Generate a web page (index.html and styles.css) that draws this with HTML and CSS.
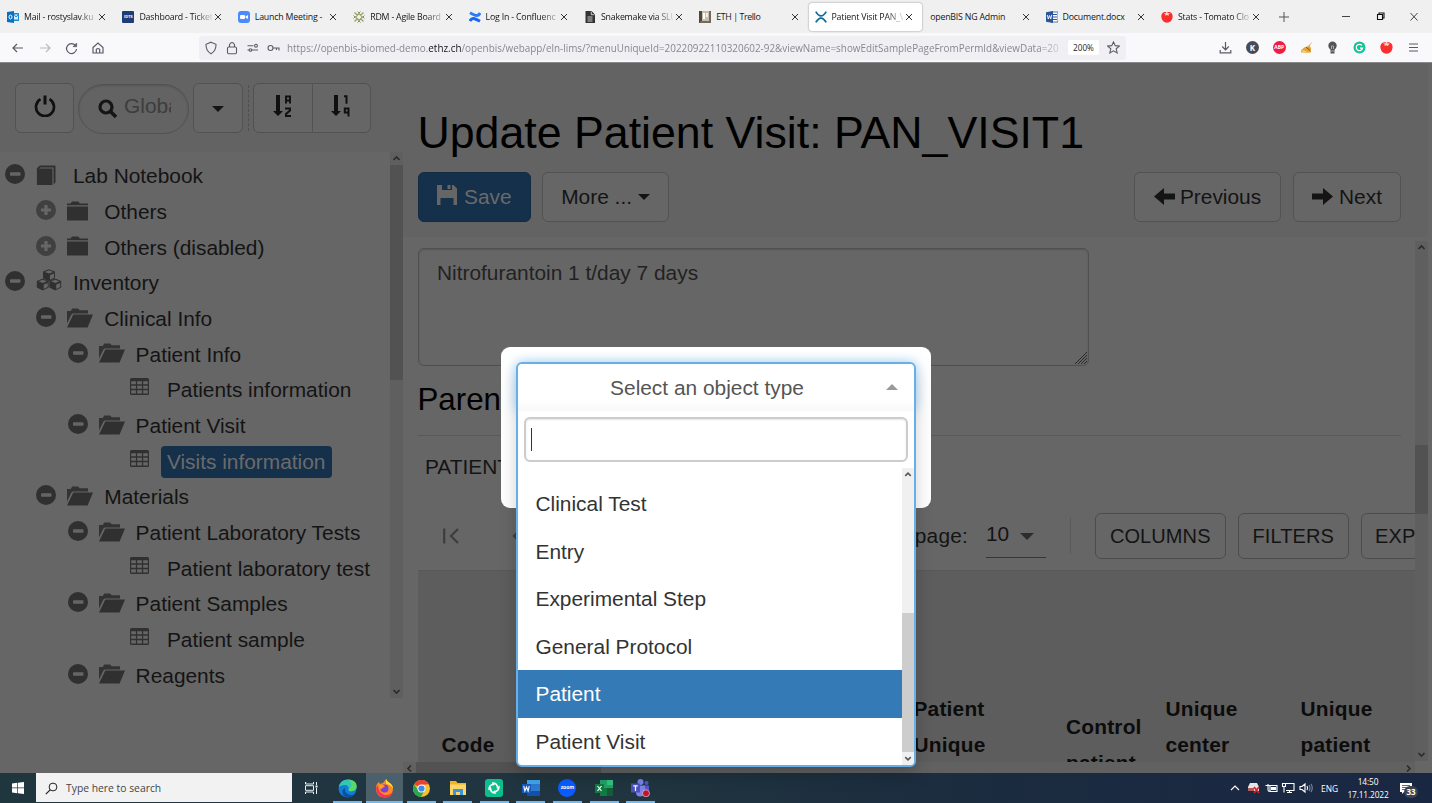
FILE: index.html
```html
<!DOCTYPE html>
<html lang="en">
<head>
<meta charset="utf-8">
<title>Patient Visit PAN_VISIT1</title>
<link rel="stylesheet" href="styles.css">
</head>
<body>
<svg class="defs" aria-hidden="true">
  <symbol id="x" viewBox="0 0 8 8"><path d="M1 1l6 6M7 1L1 7" stroke="#333" stroke-width="1" fill="none"/></symbol>
  <symbol id="minus" viewBox="0 0 20 20"><circle cx="10" cy="10" r="10" fill="#303030"/><rect x="5" y="8.2" width="10.5" height="3.6" rx=".8" fill="#656565"/></symbol>
  <symbol id="plus" viewBox="0 0 20 20"><circle cx="10" cy="10" r="10" fill="#404040"/><path d="M10 5v10M5 10h10" stroke="#666" stroke-width="3.2"/></symbol>
  <symbol id="folder" viewBox="0 0 26 20"><path d="M0 2.6h3.6L5 .6h6.4l1.4 2H21v1.700H0zM0 5.600h21v14H0z" fill="#303030"/></symbol>
  <symbol id="open" viewBox="0 0 26 20"><path d="M0 3h3.8L5.2.6h6l1.4 1.6H21v3.2H5.600L4.400 6.400 0 15.500z" fill="#333"/><path d="M6.300 6.600H26L20.600 19.600H0z" fill="#303030"/></symbol>
  <symbol id="book" viewBox="0 0 26 21"><path d="M.3 3.4L3.4.6h16.4V18l-2 2.4V2.6H4L2.6 3.8h14V21H.3z" fill="#303030"/></symbol>
  <symbol id="table" viewBox="0 0 19 17"><path d="M1.5 0h16Q19 0 19 1.5v14Q19 17 17.500 17h-16Q0 17 0 15.500v-14Q0 0 1.500 0z" fill="#303030"/><path d="M1.200 3.200h4.700v3H1.200zM7.200 3.200h4.700v3H7.200zM13.200 3.200h4.600v3h-4.600zM1.200 7.700h4.700v3H1.200zM7.200 7.700h4.700v3H7.200zM13.200 7.700h4.600v3h-4.600zM1.200 12.200h4.700v3.300H1.200zM7.200 12.200h4.700v3.300H7.200zM13.200 12.200h4.600v3.300h-4.600z" fill="#666"/></symbol>
  <symbol id="cube" viewBox="0 0 12 12"><path d="M6 .3l5.700 2.200v6.300L6 11.700.3 8.800V2.500z" fill="#303030"/><path d="M6 1.300l4 1.500L6 4.400 2 2.800zM6.900 6l3.900-1.600v3.900L6.900 10.200z" fill="#666"/></symbol>
  <symbol id="cubes" viewBox="0 0 26 22"><use href="#cube" x="6.500" y="0" width="13" height="12.500"/><use href="#cube" x="0" y="9.300" width="13.500" height="12.500"/><use href="#cube" x="12.500" y="9.300" width="13.500" height="12.500"/></symbol>
  <symbol id="tomato" viewBox="0 0 13 13"><path d="M6.500 1.500C10 .3 12.900 2.700 12.600 6.500 12.300 10.300 9.600 12.700 6.500 12.700S.7 10.300.4 6.500C.1 2.700 3 .3 6.500 1.500z" fill="#fb2e2e"/><path d="M3 2.200l2.200.3L6.200.8l1.200 1.700 2.600-.2-1.800 1.600.2 1.300-1.900-1-2 .9.300-1.300z" fill="#fff" opacity=".8"/></symbol>
</svg>

<header class="browser">
  <div class="tabs">
    <div class="tab"><svg class="fav" viewBox="0 0 12 12"><path d="M6 2h6v8H6z" fill="#1a8ad6"/><path d="M7 3.500h4v5H7z" fill="#d9ecf9"/><path d="M7 3.500l2 2.500 2.500-2.500" stroke="#1a8ad6" fill="none"/><path d="M0 1l7-1v12l-7-1z" fill="#0a6fc0"/><ellipse cx="3.500" cy="6" rx="1.500" ry="2" fill="none" stroke="#fff"/></svg><span class="name fade">Mail - rostyslav.ku</span><svg class="close"><use href="#x"/></svg></div>
    <div class="tab"><span class="fav idts">IDTS</span><span class="name fade">Dashboard - Ticket</span><svg class="close"><use href="#x"/></svg></div>
    <div class="tab"><svg class="fav" viewBox="0 0 12 12"><rect width="12" height="12" rx="3" fill="#4a8cff"/><rect x="2" y="4" width="5" height="4" rx="1" fill="#fff"/><path d="M7.500 5.500L10 4v4L7.500 6.500z" fill="#fff"/></svg><span class="name">Launch Meeting -</span><svg class="close"><use href="#x"/></svg></div>
    <div class="tab"><svg class="fav" viewBox="0 0 12 12"><path d="M6 2.500L9.500 6 6 9.500 2.500 6zM1.500 1.500l3 3M10.500 1.500l-3 3M1.500 10.500l3-3M10.500 10.500l-3-3" fill="none" stroke="#9aa365" stroke-width="1.300"/><path d="M4.500.5L6 2 7.500.5M4.500 11.500L6 10l1.500 1.500M.5 4.500L2 6 .5 7.500M11.500 4.500L10 6l1.500 1.500" fill="none" stroke="#8b8f6a"/></svg><span class="name fade">RDM - Agile Board</span><svg class="close"><use href="#x"/></svg></div>
    <div class="tab"><svg class="fav" viewBox="0 0 12 12"><path d="M.8 10C3 6 5 7 11 10.300" fill="none" stroke="#1868f0" stroke-width="3"/><path d="M11.200 2C9 6 7 5 1 1.700" fill="none" stroke="#2c7bfa" stroke-width="3"/></svg><span class="name fade">Log In - Confluenc</span><svg class="close"><use href="#x"/></svg></div>
    <div class="tab"><svg class="fav" viewBox="0 0 12 12"><path d="M1.500 0h6L11 3.500V12H1.500z" fill="#333"/><path d="M7.300.7v3h3M3.500 6h5M3.500 8h5M3.500 10h5" fill="none" stroke="#eee" stroke-width=".8"/></svg><span class="name fade">Snakemake via SLU</span><svg class="close"><use href="#x"/></svg></div>
    <div class="tab"><svg class="fav" viewBox="0 0 12 12"><rect width="12" height="12" fill="#c9bfae"/><path d="M0 0h3v12H0z" fill="#4c4942"/><path d="M1 10h10v2H1zM10 0h2v12h-2z" fill="#726a5e"/><path d="M4 2h2v6H4z" fill="#fff"/><path d="M7 2h2v4H7z" fill="#f6efe0"/></svg><span class="name tight">ETH | Trello</span><svg class="close"><use href="#x"/></svg></div>
    <div class="tab active"><svg class="fav" viewBox="0 0 12 12"><path d="M.8.600Q6 9.200 11.200.6M.8 11.400Q6 2.800 11.200 11.400" stroke="#0c6c9c" stroke-width="1.800" fill="none"/></svg><span class="name fade">Patient Visit PAN_V</span><svg class="close"><use href="#x"/></svg></div>
    <div class="tab"><span class="name">openBIS NG Admin</span><svg class="close"><use href="#x"/></svg></div>
    <div class="tab"><svg class="fav" viewBox="0 0 12 12"><rect x="5" y="1" width="7" height="10" fill="#fff" stroke="#2b579a" stroke-width=".8"/><path d="M7 3.500h4M7 6h4M7 8.500h4" stroke="#2b579a"/><path d="M0 1.200L7 0v12l-7-1.200z" fill="#2b579a"/><path d="M1.300 4l1 4 1.200-3.500L4.700 8l1-4" stroke="#fff" stroke-width=".9" fill="none"/></svg><span class="name">Document.docx</span><svg class="close"><use href="#x"/></svg></div>
    <div class="tab"><svg class="fav"><use href="#tomato"/></svg><span class="name fade">Stats - Tomato Clo</span><svg class="close"><use href="#x"/></svg></div>
    <svg class="newtab" viewBox="0 0 10 10"><path d="M5 0v10M0 5h10" stroke="#555"/></svg>
    <svg class="winctl" viewBox="0 0 80 12"><path d="M4 5.500h8" stroke="#444"/><path d="M39.500 3.500h5v5h-5zM41 3.500V2h5v5h-1.500" fill="none" stroke="#111" stroke-width="1.100"/><path d="M72.500 2l7 7.500M79.500 2l-7 7.500" stroke="#444"/></svg>
  </div>
  <div class="navbar">
    <svg class="nav" viewBox="0 0 110 24"><g fill="none" stroke="#5b5b66" stroke-width="1.200"><path d="M23 12H13M17 8l-4 4 4 4"/><path d="M40 12h10M46 8l4 4-4 4" stroke="#bbb"/><path d="M75.500 9.500A5 5 0 1 0 76.500 13"/><path d="M76.700 7v3.700H73z" fill="#5b5b66" stroke-width=".6"/><path d="M93 11.500L98 7l5 4.500v5.500h-10zM96.300 17v-3.500q1.700-2 3.400 0V17"/></g></svg>
    <div class="urlbar">
      <svg class="urlicons" viewBox="0 0 84 24"><g fill="none" stroke="#5b5b66" stroke-width="1.100"><path d="M12 6.200L17 8.300q.3 6.500-5 9.500-5.300-3-5-9.500z"/><rect x="28.500" y="11" width="9" height="6.700" rx="1.200"/><path d="M30.500 11V8.500q2.500-4 5 0V11"/><path d="M48.500 9.700h6M53 14h6M48.500 14h2"/><circle cx="57" cy="9.700" r="1.400"/><circle cx="51.500" cy="14" r="1.300"/><circle cx="71.500" cy="12" r="2.500"/><path d="M74 12h6v2.500M77.500 12v2"/></g></svg>
      <span class="url">https://openbis-biomed-demo.<b>ethz.ch</b>/openbis/webapp/eln-lims/?menuUniqueId=20220922110320602-92&amp;viewName=showEditSamplePageFromPermId&amp;viewData=20</span>
      <span class="zoom">200%</span>
      <svg class="star" viewBox="0 0 12 12"><path d="M6 .8l1.600 3.500 3.800.4-2.900 2.500.9 3.800L6 9.100 2.600 11l.9-3.800L.6 4.700l3.800-.4z" fill="none" stroke="#5b5b66"/></svg>
    </div>
    <div class="exts">
      <svg viewBox="0 0 13 13"><path d="M6.500 1v7.500M3.200 5.500l3.300 3.300 3.300-3.300M1.200 9v2.800h10.600V9" fill="none" stroke="#5b5b66" stroke-width="1.200"/></svg>
      <span class="badge k">K</span><span class="badge abp">ABP</span>
      <svg viewBox="0 0 13 13"><path d="M12.500.5L9.500 5l1.500 2v4.500l-9.500.5-.5-2.500 3-3 3.500-1z" fill="#e0a43c"/><path d="M3 9l4 1.500L5 12H1z" fill="#f0d07c"/><path d="M6 6l4 3.500" stroke="#a23d2a"/></svg>
      <svg viewBox="0 0 13 13"><circle cx="6.500" cy="4.700" r="4.200" fill="#555"/><path d="M4.500 8h4v4.500h-4z" fill="#555"/><path d="M5.500 8V5h2v3M4.500 10h4" stroke="#ccc" stroke-width=".7" fill="none"/></svg>
      <svg viewBox="0 0 13 13"><circle cx="6.500" cy="6.500" r="6" fill="#15c39a"/><path d="M9 4.500A3.200 3.200 0 1 0 9.600 7.200H7" fill="none" stroke="#fff" stroke-width="1.200"/></svg>
      <svg viewBox="0 0 13 13"><use href="#tomato"/></svg>
      <svg viewBox="0 0 13 13"><path d="M2 3h9M2 6.500h9M2 10h9" stroke="#5b5b66" stroke-width="1.100"/></svg>
    </div>
  </div>
</header>

<main class="app">
  <aside class="side">
    <div class="sidehead">
      <div class="btn power"><svg width="22" height="22" viewBox="0 0 22 22"><path d="M6.500 4.200a9 9 0 1 0 9 0" fill="none" stroke="#101010" stroke-width="2.700"/><path d="M11 .5v9" stroke="#101010" stroke-width="3"/></svg></div>
      <div class="search"><svg width="20" height="20" viewBox="0 0 20 20"><circle cx="8" cy="8" r="6" fill="none" stroke="#151515" stroke-width="3.200"/><path d="M12.500 12.500l5.500 5.500" stroke="#151515" stroke-width="3.600"/></svg><span class="ph">Globa</span></div>
      <div class="btn drop"><i class="caret"></i></div>
      <i class="dots"></i>
      <div class="group">
        <span><svg width="19" height="22" viewBox="0 0 19 22"><path d="M3 0h4v16h3l-5 5-5-5h3z" fill="#101010"/><path d="M13 8.500V1.500h4v7M13 5.500h4M12 13.500h5v2l-4 3.500v2h5" fill="none" stroke="#101010" stroke-width="1.900"/></svg></span>
        <span><svg width="19" height="22" viewBox="0 0 19 22"><path d="M3 0h4v16h3l-5 5-5-5h3z" fill="#101010"/><path d="M13 1.300h2.500v7.500M17.500 21.500V13.500h-3.700v4h3.700" fill="none" stroke="#101010" stroke-width="2"/></svg></span>
      </div>
    </div>
    <div class="sidebody">
      <div class="tree">
        <div class="row l0"><svg class="exp"><use href="#minus"/></svg><svg class="ico"><use href="#book"/></svg><span>Lab Notebook</span></div>
        <div class="row l1"><svg class="exp"><use href="#plus"/></svg><svg class="ico"><use href="#folder"/></svg><span>Others</span></div>
        <div class="row l1"><svg class="exp"><use href="#plus"/></svg><svg class="ico"><use href="#folder"/></svg><span>Others (disabled)</span></div>
        <div class="row l0"><svg class="exp"><use href="#minus"/></svg><svg class="ico cubes"><use href="#cubes"/></svg><span>Inventory</span></div>
        <div class="row l1"><svg class="exp"><use href="#minus"/></svg><svg class="ico"><use href="#open"/></svg><span>Clinical Info</span></div>
        <div class="row l2"><svg class="exp"><use href="#minus"/></svg><svg class="ico"><use href="#open"/></svg><span>Patient Info</span></div>
        <div class="row l3"><i class="exp"></i><svg class="ico tbl"><use href="#table"/></svg><span>Patients information</span></div>
        <div class="row l2"><svg class="exp"><use href="#minus"/></svg><svg class="ico"><use href="#open"/></svg><span>Patient Visit</span></div>
        <div class="row l3"><i class="exp"></i><svg class="ico tbl"><use href="#table"/></svg><span class="selected">Visits information</span></div>
        <div class="row l1"><svg class="exp"><use href="#minus"/></svg><svg class="ico"><use href="#open"/></svg><span>Materials</span></div>
        <div class="row l2"><svg class="exp"><use href="#minus"/></svg><svg class="ico"><use href="#open"/></svg><span>Patient Laboratory Tests</span></div>
        <div class="row l3"><i class="exp"></i><svg class="ico tbl"><use href="#table"/></svg><span>Patient laboratory test</span></div>
        <div class="row l2"><svg class="exp"><use href="#minus"/></svg><svg class="ico"><use href="#open"/></svg><span>Patient Samples</span></div>
        <div class="row l3"><i class="exp"></i><svg class="ico tbl"><use href="#table"/></svg><span>Patient sample</span></div>
        <div class="row l2"><svg class="exp"><use href="#minus"/></svg><svg class="ico"><use href="#open"/></svg><span>Reagents</span></div>
      </div>
      <div class="vbar sidebar-scroll"><svg viewBox="0 0 13 13"><path d="M3.500 8l3-3 3 3" /></svg><i class="thumb"></i><i class="fill"></i><svg viewBox="0 0 13 13"><path d="M3.500 5l3 3 3-3"/></svg></div>
    </div>
  </aside>

  <section class="content">
    <div class="conthead">
      <h1>Update Patient Visit: PAN_VISIT1</h1>
      <div class="actions">
        <div class="btn save"><svg width="20" height="20" viewBox="0 0 20 20"><path d="M0 0h5v5h10V0h1.500L20 3.500V20h-3.500v-7H3.500v7H0z" fill="#666"/><path d="M10.500 0h3v4h-3z" fill="#666"/></svg>Save</div>
        <div class="btn more">More ... <i class="caret"></i></div>
        <div class="btn prev"><svg width="21" height="17" viewBox="0 0 21 17"><path d="M0 8.500L10 0v5.500h11v6H10V17z" fill="#141414"/></svg>Previous</div>
        <div class="btn next"><svg width="21" height="17" viewBox="0 0 21 17"><path d="M21 8.500L11 0v5.500H0v6h11V17z" fill="#141414"/></svg>Next</div>
      </div>
    </div>
    <div class="contmain">
      <div class="contbody">
        <div class="textarea">Nitrofurantoin 1 t/day 7 days<svg class="grip" width="12" height="12" viewBox="0 0 12 12"><path d="M0 12L12 0M3 12l9-9M6 12l6-6M9 12l3-3" stroke="#222" stroke-width=".9"/></svg></div>
        <h2>Parents</h2>
        <div class="patient">PATIENT</div>
        <div class="pager">
          <svg class="first-ico" width="90" height="20" viewBox="0 0 90 20"><path d="M1.200 2.500v15M15 3l-7 7 7 7M77 4l-6 6 6 6" fill="none" stroke="#3d3d3d" stroke-width="2.200"/></svg>
          <span class="rows">Rows per page:</span>
          <span class="ten">10<i class="caret big"></i></span>
          <i class="sep"></i>
          <span class="obtn columns">COLUMNS</span><span class="obtn filters">FILTERS</span><span class="obtn export">EXP</span>
        </div>
        <div class="thead">
          <span class="c1">Code</span><span class="c2">Patient<br>Unique</span><span class="c3">Control<br>patient</span><span class="c4">Unique<br>center</span><span class="c5">Unique<br>patient</span>
        </div>
        <div class="hbar"><svg viewBox="0 0 13 13"><path d="M8 3.500l-3 3 3 3"/></svg><i class="thumb"></i><i class="fill"></i><svg viewBox="0 0 13 13"><path d="M5 3.500l3 3-3 3"/></svg></div>
      </div>
      <div class="vbar main-scroll"><svg viewBox="0 0 13 13"><path d="M3.500 8l3-3 3 3"/></svg><i class="gap"></i><i class="thumb"></i><i class="fill"></i><svg viewBox="0 0 13 13"><path d="M3.500 5l3 3 3-3"/></svg></div>
    </div>
  </section>
</main>

<div class="modal"></div>
<div class="select">
  <div class="selhead"><span>Select an object type</span><i class="up"></i></div>
  <div class="selsearch"><div class="selinput"><i class="cursor"></i></div></div>
  <div class="sellist">
    <div class="opts"><div>Clinical Test</div><div>Entry</div><div>Experimental Step</div><div>General Protocol</div><div class="hl">Patient</div><div>Patient Visit</div></div>
    <div class="vbar list-scroll"><svg viewBox="0 0 13 13"><path d="M3.500 8l3-3 3 3"/></svg><i class="fill"></i><i class="thumb"></i><svg viewBox="0 0 13 13"><path d="M3.500 5l3 3 3-3"/></svg></div>
  </div>
</div>

<footer class="taskbar">
  <div class="start"><svg width="12" height="12" viewBox="0 0 12 12"><path d="M0 1.500L5.300.8v4.800H0zM6 .7L12 0v5.600H6zM0 6.300h5.300v4.900L0 10.500zM6 6.300h6V12l-6-.7z" fill="#fff"/></svg></div>
  <div class="tsearch"><svg width="13" height="13" viewBox="0 0 13 13"><circle cx="8" cy="5" r="3.900" fill="none" stroke="#222"/><path d="M5.200 7.800L.8 12.200" stroke="#222" stroke-width="1.200"/></svg>Type here to search</div>
  <div class="task tv"><svg width="13" height="12" viewBox="0 0 13 12"><path d="M1 1V.5M.5 0v2h8V0M.5 12v-2h8v2M.5 3.700h8v4.600h-8zM11.500 0v3M11.500 6v6" fill="none" stroke="#e8eef0"/><path d="M10.500 3.500h2v2h-2z" fill="#fff"/></svg></div>
  <div class="task run"><svg width="19" height="19" viewBox="0 0 19 19"><circle cx="9.500" cy="9.500" r="9" fill="#0f7fd6"/><path d="M.7 8Q3-.2 11 .6q8 1.200 7.600 7.400Q18 12 13 12.300q-3 0-2.300-2.100Q11 6 7 6 3 6 .7 8z" fill="#35c6b3"/><path d="M11 .6q8 1.200 7.600 7.400Q18 12 13 12.300q-3 0-2.300-2.100Q16 7 11 .6z" fill="#5ad765"/><path d="M7 9q-1 6 6 7 2.500.2 4.500-1.500Q14 19 9 18.500 4 17 4.500 12 5 10 7 9z" fill="#0c4fa0"/></svg></div>
  <div class="task run on"><svg width="19" height="19" viewBox="0 0 19 19"><path d="M1 9Q1 5 4 3l1 2 3-1 3-4q1 2 3 3.500 4 2.500 4 7-1 8-8.500 8Q1 18 1 9z" fill="#ff8a1f"/><path d="M11 0q1 2 3 3.500 4 2.500 4 6Q15 5 11 5z" fill="#ffdf3a"/><path d="M1 9q1 9 9 9.500 6-.5 8-6-3 4-8 3.500Q3 14 3 6z" fill="#f7305f"/><circle cx="9.500" cy="9.500" r="4" fill="#7a42d8"/><path d="M4 6q5-1 6 2-3 0-3 2Q4 10 4 6z" fill="#ff9d24"/></svg></div>
  <div class="task run"><svg width="17" height="17" viewBox="0 0 18 18"><circle cx="9" cy="9" r="9" fill="#f5c12e"/><path d="M9 9L1.200 4.500A9 9 0 0 1 16.800 4.500L9 5z" fill="#e54335"/><path d="M1.200 4.500A9 9 0 0 0 8.500 18L12 11 5 10z" fill="#2da650"/><circle cx="9" cy="9" r="4.200" fill="#fff"/><circle cx="9" cy="9" r="3.300" fill="#4285f4"/></svg></div>
  <div class="task run"><svg width="16" height="14" viewBox="0 0 16 14"><path d="M0 0h6l1.500 2H16v12H0z" fill="#f0b429"/><path d="M0 3.500h16V14H0z" fill="#fcd668"/><path d="M3 14V8h10v6h-3v-3H6v3z" fill="#3d94d9"/></svg></div>
  <div class="task run"><svg width="18" height="18" viewBox="0 0 18 18"><rect width="18" height="18" rx="3" fill="#0dbd8b"/><g fill="none" stroke="#fff" stroke-width="1.500" stroke-linecap="round"><path d="M7.500 4q5 0 5 5"/><path d="M14 7.500q0 5-5 5"/><path d="M10.500 14q-5 0-5-5"/><path d="M4 10.500q0-5 5-5"/></g></svg></div>
  <div class="task run"><svg width="18" height="16" viewBox="0 0 18 16"><path d="M5 0h13v16H5z" fill="#2b7cd3"/><path d="M5 0h13v4H5z" fill="#41a5ee"/><path d="M5 11h13v5H5z" fill="#1550a8"/><path d="M0 4h9v9H0z" fill="#185abd"/><path d="M1.700 6l1.200 5L4.500 7l1.600 4 1.200-5" fill="none" stroke="#fff" stroke-width="1.100"/></svg></div>
  <div class="task run"><span class="zm">zoom</span></div>
  <div class="task run"><svg width="18" height="16" viewBox="0 0 18 16"><path d="M5 0h13v16H5z" fill="#21a366"/><path d="M12 0h6v5h-6z" fill="#33c481"/><path d="M5 8h13v8H5z" fill="#107c41"/><path d="M12 8h6v8h-6z" fill="#185c37"/><path d="M0 4h9v9H0z" fill="#107c41"/><path d="M2.500 6l4 5M6.500 6l-4 5" stroke="#fff" stroke-width="1.200"/></svg></div>
  <div class="task run"><svg width="19" height="18" viewBox="0 0 19 18"><circle cx="9.500" cy="3" r="3" fill="#7b83eb"/><circle cx="15.500" cy="4" r="2" fill="#5059c9"/><path d="M12 6.500h6v5q-1 4-5 3z" fill="#5059c9"/><path d="M5 6.500h9v6q-1 5-5 5t-4-4z" fill="#7b83eb"/><path d="M0 4.500h9v9H0z" fill="#4b53bc"/><path d="M2.300 6.800h4.400M4.500 6.800V12" stroke="#fff" stroke-width="1.200"/><circle cx="15" cy="14.300" r="3.500" fill="#c4122f" stroke="#e8e8ee" stroke-width=".6"/></svg></div>
  <div class="tray">
    <svg width="84" height="14" viewBox="0 0 84 14"><g fill="none" stroke="#fff" stroke-width="1.100"><path d="M1 9l4-4 4 4"/><path d="M40 4.500h7v6h-7zM35.500 4.500h4M38 3v6q0 1.500 2 1.500"/><path d="M54 2.500h10v7h-8M57 11.500h5M59.500 9.500v2M52.500 2.500h3v3h-3zM54 5.500v6"/><path d="M70 5.500h2l3-2.500v8l-3-2.500h-2z"/><path d="M77 5q1.200 2 0 4"/><path d="M79 4q2 3 0 6M81 3q2.500 4 0 8" stroke="#7e889a"/></g><path d="M20 2h7l2 4v4H18V6z" fill="#e5e5e5"/><path d="M18 7h6v3h-6z" fill="#b25a5a"/><path d="M24 6l5 6M29 6l-5 6" stroke="#d8202a" stroke-width="1.700"/><path d="M41 6h5v3h-5z" fill="#fff"/></svg>
    <span class="eng">ENG</span>
    <span class="clock">14:50<br>17.11.2022</span>
    <span class="notif"><svg width="12" height="11" viewBox="0 0 12 11"><path d="M0 0h12v9H4l-2 2V9H0z" fill="#fff"/><path d="M2 2.500h8M2 4.500h8M2 6.500h5" stroke="#1b2a40" stroke-width=".7"/></svg><b>33</b></span>
  </div>
</footer>
</body>
</html>
```

FILE: styles.css
```css
* { box-sizing: border-box; }
html, body { margin: 0; height: 100%; overflow: hidden; }
body {
  display: flex; flex-direction: column; width: 1432px; height: 803px;
  font-family: "Liberation Sans", Arial, sans-serif; font-size: 20.88px; color: #141414; background: #666;
}
svg { display: block; flex: none; }
i { display: block; flex: none; }
.defs { position: absolute; width: 0; height: 0; }

/* Browser chrome */
.browser { flex: none; height: 63px; background: #f9f9fb; border-bottom: 1px solid #8a8a8c; font-family: "Open Sans", "Noto Sans", sans-serif; }
.tabs { display: flex; align-items: center; height: 33px; background: #f0f0f0; }
.tab { display: flex; align-items: center; flex: none; width: 115.4px; height: 28px; padding-left: 7px; border-radius: 3px; }
.tab.active { background: #fff; box-shadow: 0 0 2px rgba(0,0,0,.45); width: 113px; margin: 0 1.6px 0 .8px; padding-left: 6px; }
.fav { width: 12px; height: 12px; margin-right: 5px; flex: none; }
.idts { background: #1d3c78; color: #fff; font-size: 4px; font-weight: 700; line-height: 12px; text-align: center; border-radius: 1px; }
.name { flex: 1; min-width: 0; white-space: nowrap; font-size: 8.8px; letter-spacing: -.2px; line-height: 14px; color: #15141a; }
.name.fade { mask-image: linear-gradient(90deg, #000 76%, rgba(0,0,0,.15)); }
.name.tight { letter-spacing: -.4px; }
.close { width: 8px; height: 8px; margin: 0 9px 0 2px; }
.newtab { width: 10px; height: 10px; margin-left: 10px; }
.winctl { width: 80px; height: 12px; margin-left: 49px; }
.navbar { display: flex; align-items: center; height: 29px; }
.nav { width: 110px; height: 24px; }
.urlbar { display: flex; align-items: center; width: 927px; height: 24px; margin-left: 89px; background: #f0f0f4; border-radius: 3px; }
.urlicons { width: 84px; height: 24px; }
.url { flex: none; width: 779px; padding-left: 4px; white-space: nowrap; font-size: 9.88px; color: #87878e; mask-image: linear-gradient(90deg, #000 97%, rgba(0,0,0,.2)); }
.url b { font-weight: 400; color: #15141a; }
.zoom { width: 31px; height: 15px; margin-left: 6px; background: #fff; border-radius: 2px; font-size: 8.2px; line-height: 15px; text-align: center; color: #222; }
.star { width: 13px; height: 13px; margin-left: 8px; }
.exts { display: flex; align-items: center; gap: 13.85px; margin-left: 93px; }
.exts > * { width: 13px; height: 13px; }
.badge { border-radius: 50%; color: #fff; font-weight: 700; text-align: center; line-height: 13px; font-size: 8px; }
.k { background: #4a4a55; }
.abp { background: #ed1e45; font-size: 5px; }

/* Application */
.app { flex: none; display: flex; height: 710px; overflow: hidden; }
.side { width: 403px; flex: none; }
.sidehead { display: flex; height: 89px; padding: 20px 0 0 15px; background: #636363; }
.btn { display: flex; align-items: center; justify-content: center; height: 50px; border: 1.5px solid #525252; border-radius: 6px; background: #666; white-space: pre; }
.power { width: 59px; }
.power svg { margin-top: -4px; }
.search { display: flex; align-items: center; width: 111px; height: 50px; margin: 1px 4px 0 4px; padding-left: 19px; border: 1.5px solid #525252; border-radius: 25px; box-shadow: inset 0 1px 2px rgba(0,0,0,.15); }
.ph { width: 47px; margin: -6px 0 0 6px; overflow: hidden; white-space: nowrap; color: #3d3d3d; }
.drop { width: 50px; padding-top: 2px; }
.caret { width: 0; height: 0; border: 6px solid transparent; border-top-color: #141414; border-bottom: 0; }
.dots { width: 0; height: 46px; margin: 2px 5px 0 5px; border-left: 1px dashed #4f4f4f; }
.group { display: flex; width: 118px; height: 50px; margin-left: -1px; border: 1.5px solid #525252; border-radius: 6px; background: #666; }
.group span { flex: 1; display: flex; align-items: center; justify-content: center; padding: 0 1px 4px 0; }
.group span + span { border-left: 1.5px solid #525252; }
.sidebody { display: flex; height: 546px; }
.tree { width: 390px; padding-top: 6.6px; }
.row { display: flex; align-items: center; height: 35.68px; white-space: nowrap; }
.l0 { padding-left: 5px; } .l1 { padding-left: 36.3px; } .l2 { padding-left: 67.6px; } .l3 { padding-left: 98.9px; }
.exp { width: 20px; height: 20px; margin: -4px 11px 0 0; }
.ico { width: 26px; height: 20px; margin: -3px 11px 0 0; }
.ico.cubes { margin-top: -7px; height: 22px; }
.ico.tbl { width: 19px; height: 17px; margin: -7px 18px 0 0; }
.selected { margin-left: -6px; padding: 0 6.5px 0 6px; line-height: 32px; border-radius: 4px; background: #15304a; color: #6b6b6b; }
.vbar { display: flex; flex-direction: column; width: 13px; background: #5f5f5f; }
.vbar svg, .hbar svg { width: 13px; height: 13px; fill: none; stroke: #2a2a2a; stroke-width: 1.6; }
.thumb { background: #525252; }
.fill { flex: 1; }
.sidebar-scroll .thumb { height: 215px; }
.content { width: 1029px; flex: none; }
.conthead { width: 1025px; height: 174px; padding: 44px 0 0 14.5px; background: #636363; }
h1 { margin: 0 0 13px; font-weight: 400; font-size: 44.7px; line-height: 52px; color: #000; white-space: nowrap; }
.actions { display: flex; }
.save { width: 113.5px; background: #15304a; border-color: #122a42; color: #6a6a6a; }
.save svg { margin: -4px 7px 0 0; }
.more { width: 127px; margin-left: 11px; }
.prev { width: 147px; margin-left: auto; }
.next { width: 108px; margin: 0 27px 0 12px; }
.prev svg { margin: -2px 5px 0 0; }
.next svg { margin: -2px 6px 0 0; }
.contmain { display: flex; height: 536px; }
.contbody { width: 1012px; padding-top: 11px; overflow: hidden; }
.textarea { display: flex; justify-content: space-between; width: 671px; height: 118px; margin-left: 14.5px; padding: 12px 0 0 18.5px; border: 1.5px solid #4f4f4f; border-radius: 6px; color: #222; line-height: 24px; box-shadow: inset 0 1px 2px rgba(0,0,0,.15); }
.grip { align-self: flex-end; margin: 0 1px 1px 0; }
h2 { width: 983px; height: 70px; margin: 0 0 0 14.5px; padding-top: 16px; font-weight: 400; font-size: 31.3px; line-height: 36px; color: #000; border-bottom: 1px solid #595959; }
.patient { height: 77px; padding: 19px 0 0 22px; line-height: 24px; }
.pager { display: flex; align-items: center; height: 57px; white-space: nowrap; padding-bottom: 12px; }
.pager > * { flex: none; }
.first-ico { margin-left: 40px; }
.rows { width: 148px; margin-left: 286px; text-align: right; letter-spacing: .2px; }
.ten { display: flex; align-items: center; width: 60px; height: 44px; margin-left: 19px; padding-bottom: 3px; border-bottom: 1.5px solid #383838; }
.ten .caret { margin-left: 11px; margin-top: 5px; }
.caret.big { border-width: 7px; border-bottom-width: 0; border-top-color: #2c2c2c; }
.sep { width: 1px; height: 37px; margin: 0 24px; background: #5a5a5a; }
.obtn { height: 46px; line-height: 44px; text-align: center; font-size: 20px; border: 1.5px solid #4c4c4c; border-radius: 6px; margin-right: 12px; letter-spacing: .1px; }
.columns { width: 130.5px; } .filters { width: 111.5px; } .export { width: 120px; padding-left: 13px; text-align: left; }
.thead { display: flex; height: 192px; margin-left: 14.5px; padding: 120px 0 0 24px; background: #5d5d5d; border-top: 1px solid #585858; font-weight: 700; line-height: 36px; letter-spacing: .2px; overflow: hidden; color: #0c0c0c; white-space: nowrap; }
.c1 { padding-top: 36px; width: 472px; } .c2 { width: 152.5px; } .c3 { padding-top: 18px; width: 99.5px; } .c4 { width: 135px; } .c5 { width: 100px; }
.hbar { display: flex; align-items: center; height: 12px; background: #616161; }
.hbar .thumb { width: 185px; height: 12px; }
.main-scroll { height: 520px; margin-top: 4px; }
.main-scroll .gap { height: 191px; }
.main-scroll .thumb { height: 69px; }

/* Dialog over the page */
.modal { position: absolute; left: 501px; top: 347px; width: 430px; height: 161px; border-radius: 9px; background: #fff; }
.select { position: absolute; z-index: 1; left: 516px; top: 362px; width: 400px; height: 405px; border: 2px solid #66afe9; border-radius: 6px; background: #fff; box-shadow: 0 9px 18px rgba(0,0,0,.18); }
.select::before { content: ""; position: absolute; inset: -2px -2px auto; height: 50px; z-index: -1; border-radius: 6px; box-shadow: 0 0 12px rgba(102,175,233,.6); }
.selhead { position: relative; display: flex; align-items: center; justify-content: center; height: 47px; padding-right: 18px; color: #555; background: linear-gradient(#fff 75%, #f8f8f8); border-radius: 5px 5px 0 0; }
.up { position: absolute; right: 16px; top: 20px; border: 6px solid transparent; border-top: 0; border-bottom-color: #999; }
.selsearch { height: 57px; padding: 6px 6px 6px 5.5px; background: #fff; }
.selinput { height: 45px; padding: 9px 5px; border: 2px solid #ccc; border-radius: 6px; box-shadow: inset 0 1px 2px rgba(0,0,0,.1); }
.cursor { width: 1px; height: 23px; background: #333; }
.sellist { display: flex; height: 297px; background: #fff; border-radius: 0 0 5px 5px; }
.opts { flex: 1; padding-top: 12px; color: #333; }
.opts div { height: 47.6px; line-height: 47px; padding-left: 17.5px; }
.opts .hl { background: #337ab7; color: #fff; }
.list-scroll { width: 12px; background: #f0f0f0; border-bottom-right-radius: 4px; }
.list-scroll svg { width: 12px; stroke: #555; }
.list-scroll .thumb { height: 139px; background: #cdcdcd; }

/* Taskbar */
.taskbar { flex: none; display: flex; height: 30px; background: linear-gradient(90deg, #20363f 0, #20353f 45%, #1b2b3f 70%, #1a2743); font-family: "Open Sans", "Noto Sans", sans-serif; color: #fff; }
.start { width: 36px; display: flex; align-items: center; justify-content: center; }
.tsearch { display: flex; align-items: center; gap: 8px; width: 256px; height: 29px; margin-right: 1px; padding: 1px 0 0 9px; background: #f2f2f2; color: #444; font-size: 10.35px; }
.task { display: flex; align-items: center; justify-content: center; flex: none; width: 36.6px; height: 30px; }
.run { background: linear-gradient(#76b9ed, #76b9ed) center bottom / 29px 2px no-repeat; }
.on { background: linear-gradient(#76b9ed, #76b9ed) center bottom / 37px 2px no-repeat, #4b606b; }
.zm { width: 18px; height: 18px; border-radius: 50%; background: #0b5cff; font-size: 5px; font-weight: 700; line-height: 17px; text-align: center; }
.tray { display: flex; align-items: center; margin-left: auto; width: 202px; font-size: 8.4px; }
.eng { width: 20px; margin-left: 7px; }
.clock { width: 54px; text-align: center; line-height: 13px; letter-spacing: -.15px; }
.notif { position: relative; margin-left: 5px; }
.notif b { position: absolute; left: 4px; top: 3px; width: 14px; height: 12px; border-radius: 6px; background: #3b434d; font-size: 8px; line-height: 12px; text-align: center; }
```
